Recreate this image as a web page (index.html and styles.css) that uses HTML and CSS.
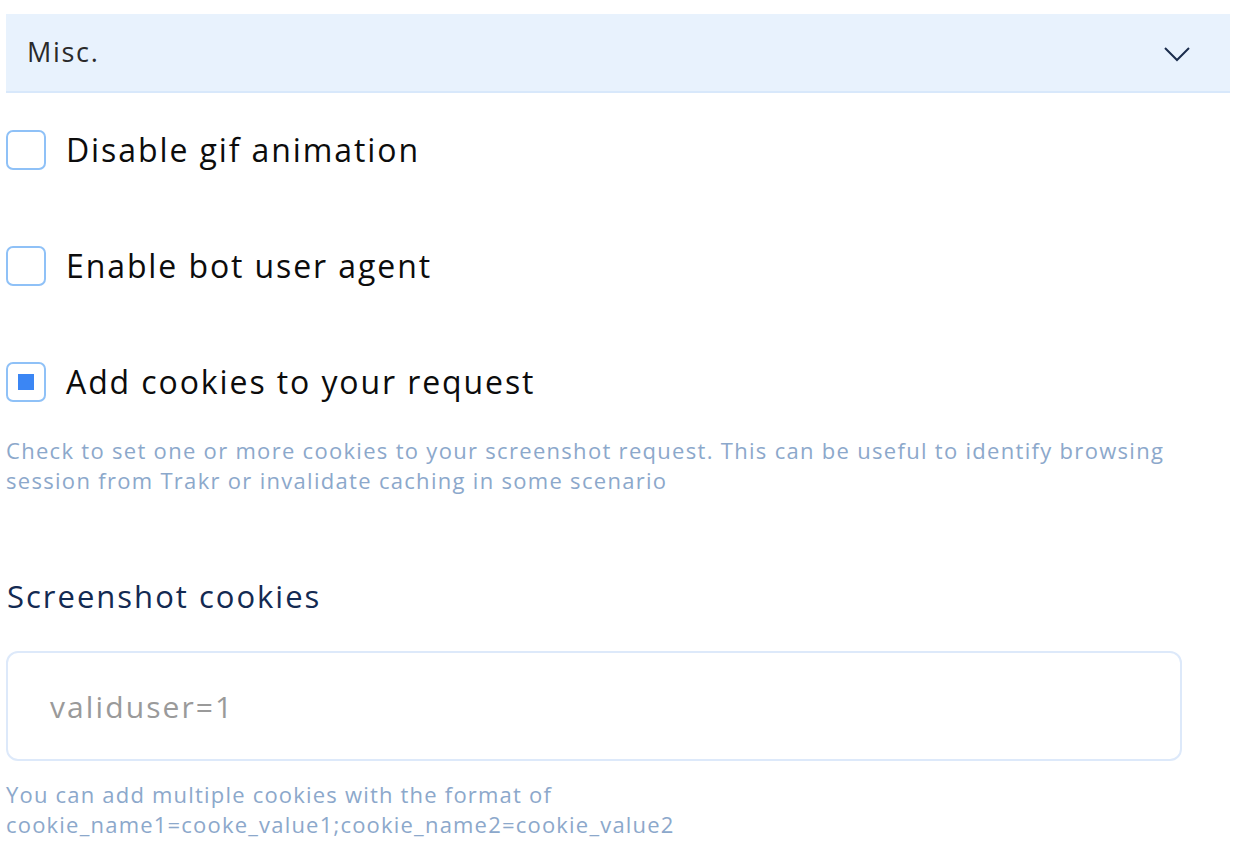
FILE: index.html
```html
<!DOCTYPE html>
<html>
<head>
<meta charset="utf-8">
<link rel="stylesheet" href="styles.css">
</head>
<body>
<div class="panel">
  <div class="panel-header">
    <span class="panel-title">Misc.</span>
    <svg class="chevron" width="28" height="16" viewBox="0 0 28 16"><path d="M2 2 L14 14 L26 2" fill="none" stroke="#1b2d4d" stroke-width="2"/></svg>
  </div>
  <div class="options">
    <label class="check-row"><span class="box"></span><span class="check-label">Disable gif animation</span></label>
    <label class="check-row"><span class="box"></span><span class="check-label">Enable bot user agent</span></label>
    <label class="check-row"><span class="box checked"><span class="dot"></span></span><span class="check-label">Add cookies to your request</span></label>
  </div>
  <p class="help help-first">Check to set one or more cookies to your screenshot request. This can be useful to identify browsing session from Trakr or invalidate caching in some scenario</p>
  <h3 class="field-title">Screenshot cookies</h3>
  <div class="input">validuser=1</div>
  <p class="help help-last">You can add multiple cookies with the format of<br>cookie_name1=cooke_value1;cookie_name2=cookie_value2</p>
</div>
</body>
</html>
```
FILE: styles.css
```css
html, body {
  margin: 0;
  padding: 0;
  background: #ffffff;
}
body {
  font-family: "Open Sans", "Lato", sans-serif;
}
.panel {
  padding: 14px 8px 0 6px;
}
.panel-header {
  height: 77px;
  background: #e8f2fd;
  border-bottom: 2px solid #d8e8fb;
  display: flex;
  align-items: center;
  justify-content: space-between;
  padding: 0 39px 0 21px;
}
.panel-title {
  font-size: 27px;
  letter-spacing: 1.7px;
  color: #2a2a2a;
  margin-top: -2px;
}
.chevron {
  display: block;
  margin-top: 2px;
}
.options {
  display: flex;
  flex-direction: column;
  gap: 76px;
  margin-top: 37px;
}
.check-row {
  display: flex;
  align-items: center;
  gap: 20px;
  height: 40px;
}
.box {
  width: 36px;
  height: 36px;
  border: 2px solid #8fc1f7;
  border-radius: 7px;
  display: flex;
  align-items: center;
  justify-content: center;
  flex: none;
}
.dot {
  width: 16px;
  height: 16px;
  background: #3b86f4;
}
.check-label {
  font-size: 32px;
  letter-spacing: 1.9px;
  color: #0c0c0c;
  margin-top: -2px;
}
.help {
  font-size: 22px;
  letter-spacing: 1.3px;
  line-height: 30px;
  color: #8ca8cb;
  margin: 0;
}
.help-first {
  margin-top: 33px;
  max-width: 1175px;
}
.field-title {
  font-weight: normal;
  font-size: 31px;
  letter-spacing: 2px;
  color: #132a52;
  margin: 81px 0 0 1px;
  line-height: 40px;
}
.input {
  margin-top: 35px;
  border: 2px solid #dde9fa;
  border-radius: 12px;
  display: flex;
  align-items: center;
  padding-left: 42px;
  box-sizing: border-box;
  width: 1176px;
  height: 110px;
  font-size: 30px;
  letter-spacing: 2.1px;
  color: #9a9a9a;
}
.help-last {
  margin-top: 18px;
  letter-spacing: 1.2px;
}
```
